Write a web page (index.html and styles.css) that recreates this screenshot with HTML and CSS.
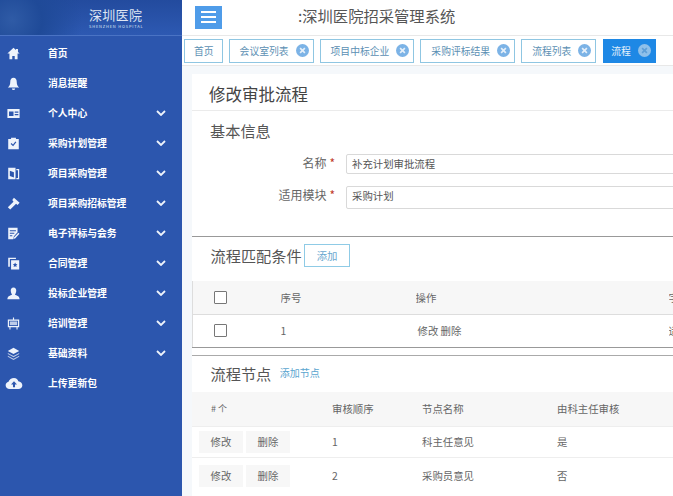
FILE: index.html
```html
<!DOCTYPE html>
<html>
<head lang="zh">
  <meta charset="UTF-8">
  <title>深圳医院招采管理系统</title>
  <link rel="stylesheet" href="styles.css">
</head>
<body>
<div class="sidebar">
  <div class="logo">
    <div class="logo-name">深圳医院</div>
    <div class="logo-en">SHENZHEN HOSPITAL</div>
  </div>
  <ul class="nav">
    <li><svg class="nav-icon" viewBox="0 0 16 16"><path fill-rule="evenodd" d="M8 1 .5 8H3v7h10V8h2.500L13.500 6.100V2.500h-2.500v1.300zM6.500 15v-4h3v4z"/></svg><span class="nav-text">首页</span></li>
    <li><svg class="nav-icon" viewBox="0 0 16 16"><path d="M8 1c-2.800 0-4 2.200-4 5 0 3.200-1 5-3 7h14c-2-2-3-3.800-3-7 0-2.800-1.200-5-4-5zM6 14a2 2 0 0 0 4 0z"/></svg><span class="nav-text">消息提醒</span></li>
    <li><svg class="nav-icon" viewBox="0 0 16 16"><path fill-rule="evenodd" d="M.5 2.500h15v11H.5zM2.500 5.500v5.500h5.500V5.500zM9.500 5.500v1.500h4.500V5.500zm0 3v1.500h4.500V8.500z"/></svg><span class="nav-text">个人中心</span><svg class="nav-arrow" viewBox="0 0 10 6"><path d="M1 1l4 4 4-4"/></svg></li>
    <li><svg class="nav-icon" viewBox="0 0 16 16"><path fill-rule="evenodd" d="M1.500 2.500H5V1h6v1.500h3.500V15h-13zM4.500 8.500l3 3 4-5-1.200-1-2.900 3.600-2-1.600z"/></svg><span class="nav-text">采购计划管理</span><svg class="nav-arrow" viewBox="0 0 10 6"><path d="M1 1l4 4 4-4"/></svg></li>
    <li><svg class="nav-icon" viewBox="0 0 16 16"><path fill-rule="evenodd" d="M1.500 1h9v14h-9zM3.500 4.500v6.500l5 2V6.500zM11.500 2.500H15V15h-3.500v-1.500h2V4h-2z"/></svg><span class="nav-text">项目采购管理</span><svg class="nav-arrow" viewBox="0 0 10 6"><path d="M1 1l4 4 4-4"/></svg></li>
    <li><svg class="nav-icon" viewBox="0 0 16 16"><path d="M8.500 1l7 6-2.500 2.800-1.800-1.500L4 15.500 1 12.500l7-6.800L6.500 3.800z"/></svg><span class="nav-text">项目采购招标管理</span><svg class="nav-arrow" viewBox="0 0 10 6"><path d="M1 1l4 4 4-4"/></svg></li>
    <li><svg class="nav-icon" viewBox="0 0 16 16"><path fill-rule="evenodd" d="M1.500 1H13v5.500l-4.500 5-.8 3.500H1.500zM3.500 4v1.300h7.500V4zM3.500 7v1.300h5.500V7zM3.500 10v1.300h3V10zM14 7l1.300 1.300-5.300 5.700-1.800.5.500-1.800z"/></svg><span class="nav-text">电子评标与会务</span><svg class="nav-arrow" viewBox="0 0 10 6"><path d="M1 1l4 4 4-4"/></svg></li>
    <li><svg class="nav-icon" viewBox="0 0 16 16"><path fill-rule="evenodd" d="M1.500 1H11v1.500H3.500V12h-2zM5 4h10v11.500H5zM10 6.800l.9 1.900 2 .2-1.500 1.400.4 2-1.800-1-1.800 1 .4-2L7.100 8.900l2-.2z"/></svg><span class="nav-text">合同管理</span><svg class="nav-arrow" viewBox="0 0 10 6"><path d="M1 1l4 4 4-4"/></svg></li>
    <li><svg class="nav-icon" viewBox="0 0 16 16"><path d="M8 .5c2.300 0 3.400 1.700 3.400 3.800S10.300 8.500 9.800 9.500c2 1 5.700 1.500 5.700 5.500H.5c0-4 3.700-4.500 5.700-5.500C5.700 8.500 4.600 6.400 4.600 4.300S5.700.5 8 .5z"/></svg><span class="nav-text">投标企业管理</span><svg class="nav-arrow" viewBox="0 0 10 6"><path d="M1 1l4 4 4-4"/></svg></li>
    <li><svg class="nav-icon" viewBox="0 0 16 16"><path fill-rule="evenodd" d="M1 3h14v9.500H1zM2.500 4.500v6.500h11V4.500zM7.300 .5h1.400V3H7.300zM3 12.500h1.300V15.500H3zM11.700 12.500H13V15.500h-1.300z"/><path d="M3.500 5.500h9v4.500h-9z" opacity=".75"/></svg><span class="nav-text">培训管理</span><svg class="nav-arrow" viewBox="0 0 10 6"><path d="M1 1l4 4 4-4"/></svg></li>
    <li><svg class="nav-icon" viewBox="0 0 16 16"><path d="M8 1l7 3.800L8 8.600 1 4.800z"/><path d="M1 7.300l7 3.800 7-3.800v1.400l-7 3.800-7-3.800zM1 10.800l7 3.800 7-3.800v1.300L8 16l-7-3.900z" opacity=".75"/></svg><span class="nav-text">基础资料</span><svg class="nav-arrow" viewBox="0 0 10 6"><path d="M1 1l4 4 4-4"/></svg></li>
    <li><svg class="nav-icon nav-icon-wide" viewBox="0 0 18 14"><path fill-rule="evenodd" d="M9 1c2.500 0 4.200 1.500 4.600 3.600C15.900 4.900 18 6.500 18 8.900c0 2.500-1.900 4.100-4.300 4.100H4.300C1.900 13 0 11.200 0 8.900c0-1.900 1.300-3.300 3.100-3.700C3.900 2.800 6.200 1 9 1zM9 4.500 5.800 8h2.100v3h2.200V8h2.100z"/></svg><span class="nav-text">上传更新包</span></li>
  </ul>
</div>

<div class="main">
  <div class="topbar">
    <div class="menu-btn"><span></span><span></span><span></span></div>
    <div class="sys-title">:深圳医院招采管理系统</div>
  </div>
  <div class="tabs">
    <a class="tab">首页</a>
    <a class="tab">会议室列表<svg class="tab-close" viewBox="0 0 12 12"><circle cx="6" cy="6" r="6"/><path d="M3.800 3.800l4.400 4.400M8.200 3.800l-4.400 4.400"/></svg></a>
    <a class="tab">项目中标企业<svg class="tab-close" viewBox="0 0 12 12"><circle cx="6" cy="6" r="6"/><path d="M3.800 3.800l4.400 4.400M8.200 3.800l-4.400 4.400"/></svg></a>
    <a class="tab">采购评标结果<svg class="tab-close" viewBox="0 0 12 12"><circle cx="6" cy="6" r="6"/><path d="M3.800 3.800l4.400 4.400M8.200 3.800l-4.400 4.400"/></svg></a>
    <a class="tab">流程列表<svg class="tab-close" viewBox="0 0 12 12"><circle cx="6" cy="6" r="6"/><path d="M3.800 3.800l4.400 4.400M8.200 3.800l-4.400 4.400"/></svg></a>
    <a class="tab tab-active">流程<svg class="tab-close" viewBox="0 0 12 12"><circle cx="6" cy="6" r="6"/><path d="M3.800 3.800l4.400 4.400M8.200 3.800l-4.400 4.400"/></svg></a>
  </div>
  <div class="content">
    <div class="panel">
      <div class="page-title">修改审批流程</div>

      <div class="section section-base">
        <div class="section-title">基本信息</div>
        <div class="form-row">
          <label>名称<i>*</i></label>
          <div class="form-input">补充计划审批流程</div>
        </div>
        <div class="form-row form-row-tall">
          <label>适用模块<i>*</i></label>
          <div class="form-input">采购计划</div>
        </div>
      </div>

      <div class="section section-match">
        <div class="section-head">
          <div class="section-title">流程匹配条件</div>
          <a class="btn-add">添加</a>
        </div>
        <table class="list match-table">
          <tr class="list-head">
            <td class="col-check"><span class="check"></span></td>
            <td class="col-no">序号</td>
            <td class="col-op">操作</td>
            <td>字段</td>
          </tr>
          <tr>
            <td class="col-check"><span class="check"></span></td>
            <td class="col-no">1</td>
            <td class="col-op col-op-links">修改 删除</td>
            <td>适用</td>
          </tr>
        </table>
      </div>

      <div class="section">
        <div class="section-head section-head-node">
          <div class="section-title">流程节点</div>
          <a class="link-add">添加节点</a>
        </div>
        <table class="list node-table">
          <tr class="list-head">
            <td class="col-act"># 个</td>
            <td class="col-order">审核顺序</td>
            <td class="col-name">节点名称</td>
            <td>由科主任审核</td>
          </tr>
          <tr>
            <td class="col-act"><a class="btn-row">修改</a><a class="btn-row">删除</a></td>
            <td class="col-order">1</td>
            <td class="col-name">科主任意见</td>
            <td>是</td>
          </tr>
          <tr>
            <td class="col-act"><a class="btn-row">修改</a><a class="btn-row">删除</a></td>
            <td class="col-order">2</td>
            <td class="col-name">采购员意见</td>
            <td>否</td>
          </tr>
        </table>
      </div>
    </div>
  </div>
</div>
</body>
</html>
```
FILE: styles.css
```css
* {
  box-sizing: border-box;
}

html, body {
  height: 100%;
}

body {
  margin: 0;
  display: flex;
  overflow: hidden;
  font-family: "Noto Sans CJK SC", "Liberation Sans", sans-serif;
  color: #555;
  background: #fff;
}

ul, li {
  margin: 0;
  padding: 0;
  list-style: none;
}

/* 左侧菜单 */
.sidebar {
  width: 182px;
  flex: none;
  background: #2c56ae;
}

.logo {
  height: 36px;
  padding: 8px 0 0 89px;
  background: radial-gradient(circle at 12px 20px, #2f5ba6 0, #1f4a98 30px, transparent 70px), linear-gradient(180deg, #234b9e, #2d59b2);
  border-bottom: 1px solid #4a73c4;
  color: #dfe6f3;
}

.logo-name {
  font-family: "Liberation Serif", "Noto Sans CJK SC", serif;
  font-size: 13px;
  line-height: 15px;
  letter-spacing: 0.3px;
}

.logo-en {
  font-size: 4px;
  line-height: 6px;
  letter-spacing: 0.8px;
  white-space: nowrap;
}

.nav {
  padding-top: 2px;
}

.nav li {
  display: flex;
  align-items: center;
  height: 30px;
  color: #fff;
}

.nav-icon {
  width: 13px;
  height: 13px;
  margin-left: 7px;
  flex: none;
  fill: #eef3fb;
}

.nav-icon-wide {
  width: 18px;
  margin-left: 5px;
}

.nav-text {
  margin-left: 28px;
  width: 108px;
  font-size: 9.8px;
  font-weight: 700;
  white-space: nowrap;
}

.nav-icon-wide + .nav-text {
  margin-left: 25px;
}

.nav-arrow {
  width: 10px;
  height: 6px;
  fill: none;
  stroke: #eef3fb;
  stroke-width: 1.800;
}

/* 右侧 */
.main {
  flex: 1;
  min-width: 0;
  display: flex;
  flex-direction: column;
}

.topbar {
  height: 36px;
  flex: none;
  display: flex;
  align-items: center;
  padding-left: 13px;
  border-bottom: 1px solid #e8e8e8;
}

.menu-btn {
  width: 27px;
  height: 23px;
  margin-top: -1px;
  background: #4f9ce9;
  display: flex;
  flex-direction: column;
  justify-content: center;
  align-items: center;
  gap: 3px;
}

.menu-btn span {
  width: 15px;
  height: 2px;
  background: #fff;
}

.sys-title {
  margin-left: 76px;
  margin-top: -6px;
  font-size: 15.300px;
  color: #555;
  white-space: nowrap;
}

.tabs {
  height: 30px;
  flex: none;
  display: flex;
  align-items: center;
  gap: 6px;
  padding-left: 2px;
  border-bottom: 1px solid #e8e8e8;
}

.tab {
  height: 24px;
  padding: 0 4px 0 10px;
  display: flex;
  align-items: center;
  border: 1px solid #8fc6e2;
  font-size: 9.800px;
  color: #5b8fb3;
  white-space: nowrap;
}

.tab:first-child {
  padding: 0 8px 0 9px;
}

.tab-close {
  width: 13px;
  height: 13px;
  margin-left: 7px;
  fill: #7cb3e6;
  stroke: #e6f0fa;
  stroke-width: 1.500;
}

.tab-close circle {
  stroke: none;
}

.tab-active {
  padding-left: 7px;
  margin-left: 1px;
  background: #1e88e5;
  border-color: #1e88e5;
  color: #e6f1fb;
}

.tab-active .tab-close {
  fill: #8fc0ea;
  stroke: #5f9fd8;
}

.content {
  flex: 1;
  min-height: 0;
  padding: 8px 0 0 10px;
  background: #f5f8fb;
  overflow: hidden;
}

.panel {
  background: #fff;
  height: 100%;
}

.page-title {
  height: 37px;
  padding: 8px 0 0 17px;
  font-size: 16.500px;
  line-height: 24px;
  color: #444;
  border-bottom: 1px solid #ebebeb;
}

.section-title {
  font-size: 15.200px;
  line-height: 22px;
  color: #555;
  white-space: nowrap;
}

.section-base {
  height: 126px;
  padding-top: 8px;
  border-bottom: 1px solid #999;
}

.section-base .section-title {
  padding-left: 18px;
  margin-bottom: 13px;
}

.form-row {
  display: flex;
  align-items: center;
  height: 20px;
  margin-top: 12px;
  font-size: 12px;
  color: #666;
}

.section-title + .form-row {
  margin-top: 0;
}

.form-row-tall {
  height: 23px;
}

.form-row label {
  width: 154px;
  padding-right: 11px;
  text-align: right;
  flex: none;
  margin-top: -4px;
}

.form-row-tall label {
  margin-top: -6px;
}

.form-row label i {
  font-style: normal;
  color: #c0392b;
  margin-left: 3px;
}

.form-input {
  flex: 1;
  height: 100%;
  padding-left: 5px;
  margin-right: -10px;
  border: 1px solid #d9d9d9;
  border-radius: 2px;
  font-size: 10.400px;
  line-height: 18px;
  color: #555;
}

.section-match {
  height: 111px;
  border-bottom: 1px solid #999;
  box-shadow: 0 7px 0 #fff, 0 8px 0 #aaa;
  margin-bottom: 7px;
}

.section-head {
  display: flex;
  align-items: center;
  height: 44px;
  padding: 0 0 8px 18.500px;
}

.btn-add {
  width: 46px;
  height: 23px;
  margin-left: 2.500px;
  border: 1px solid #8fcbe6;
  text-align: center;
  font-size: 10.400px;
  line-height: 21px;
  color: #6aa8cf;
}

.section-head-node {
  height: 37px;
  padding-bottom: 2px;
}

.link-add {
  margin-left: 8.500px;
  font-size: 10px;
  color: #5aa5cf;
}

.list {
  width: 100%;
  border-collapse: collapse;
  table-layout: fixed;
  font-size: 10.400px;
  color: #666;
}

.list td {
  padding: 0;
  white-space: nowrap;
  overflow: hidden;
}

.list-head {
  background: #f7f7f7;
}

.match-table {
  border-left: 1px solid #ddd;
}

.match-table tr {
  height: 33px;
}

.match-table tr + tr {
  border-top: 1px solid #ddd;
}

.col-check {
  width: 88px;
  padding-left: 21px !important;
}

.check {
  display: block;
  width: 13px;
  height: 13px;
  border: 1px solid #777;
  border-radius: 1px;
  background: #fff;
}

.col-no {
  width: 135px;
}

.col-op {
  width: 253px;
}

.col-op-links {
  padding-left: 2px !important;
}

.node-table .list-head {
  height: 34px;
}

.node-table tr:nth-child(2) {
  height: 31px;
}

.node-table tr:nth-child(3) {
  height: 37px;
}

.node-table tr + tr {
  border-top: 1px solid #eee;
}

.col-act {
  width: 140px;
  padding-left: 7px !important;
}

.node-table .list-head .col-act {
  padding-left: 19px !important;
  font-size: 9px;
}

.col-order {
  width: 90px;
}

.col-name {
  width: 135px;
}

.btn-row {
  display: inline-block;
  width: 44px;
  height: 22px;
  margin-right: 3px;
  background: #f7f7f7;
  text-align: center;
  line-height: 22px;
  color: #666;
}
```
